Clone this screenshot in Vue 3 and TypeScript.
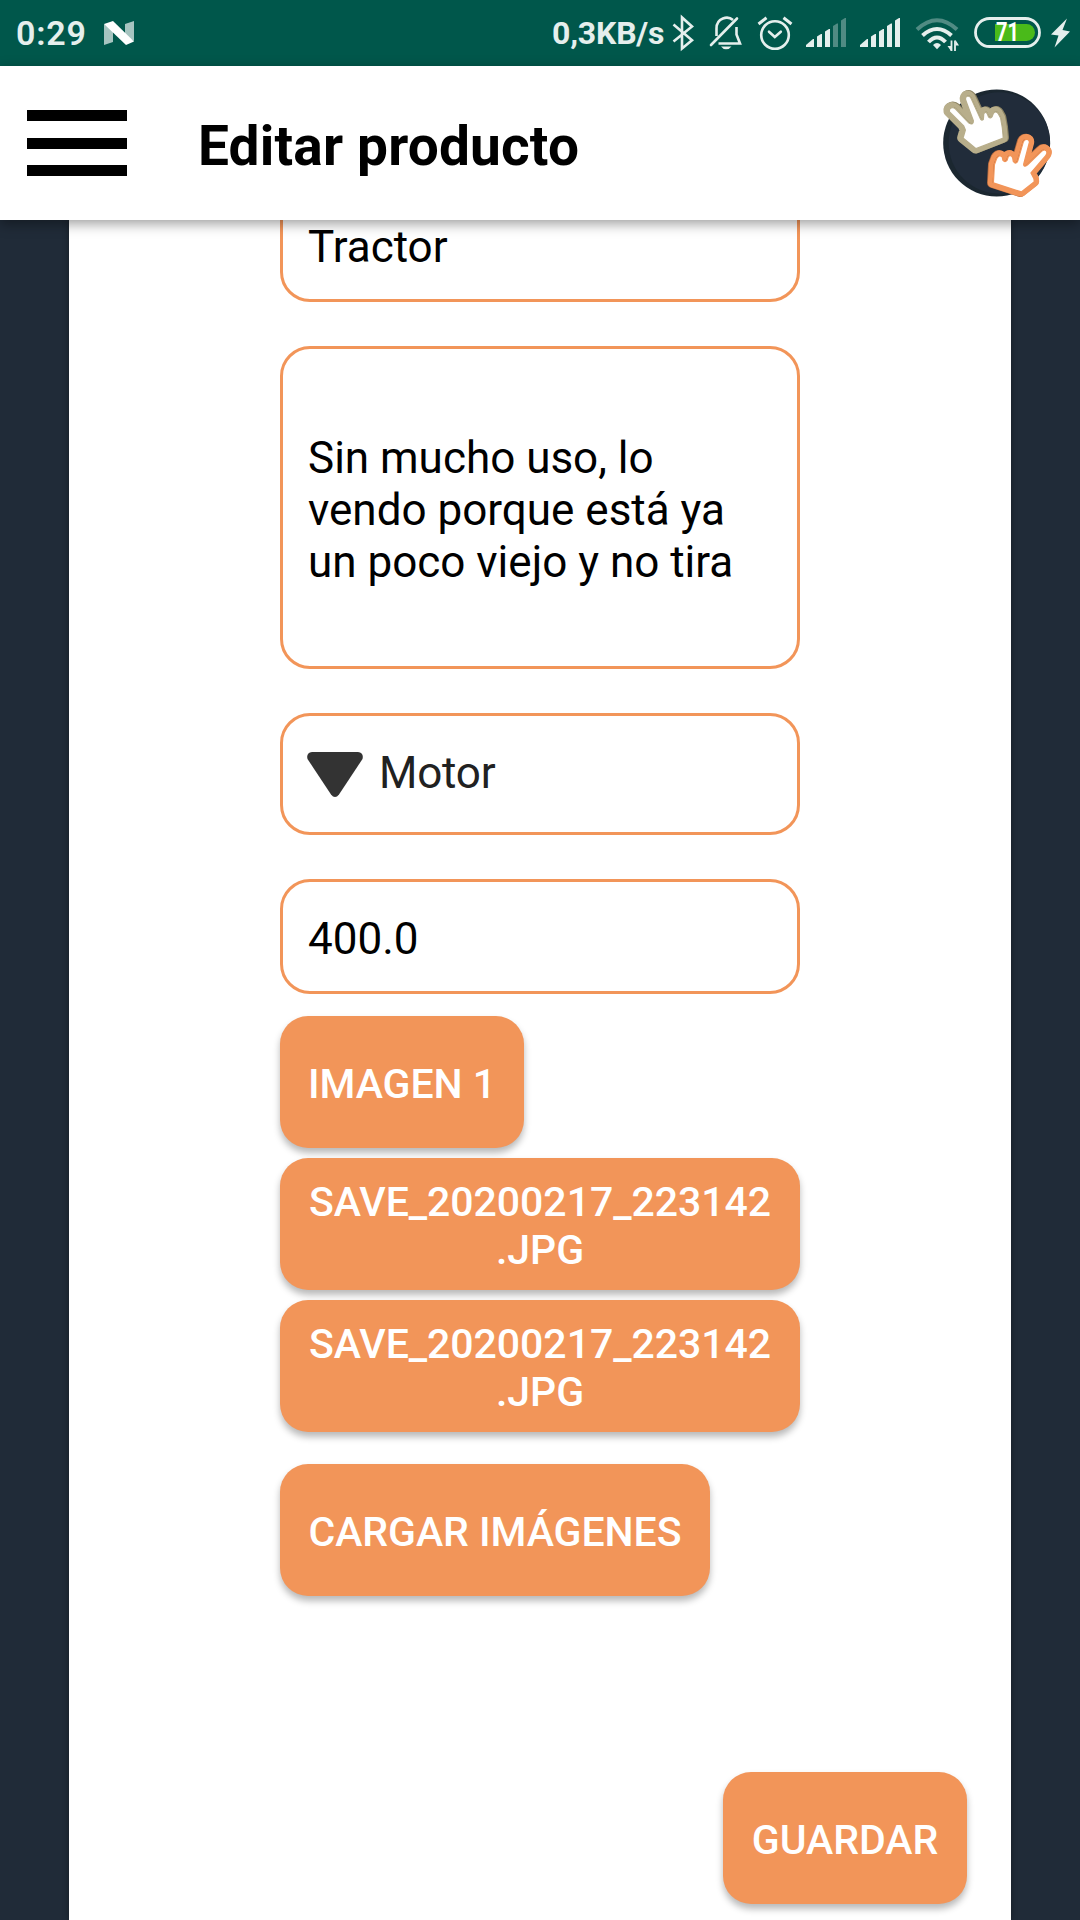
<script setup lang="ts">
interface Bar {
  x: number
  w: number
  top: number
}

const bars: Bar[] = [
  { x: 0, w: 8, top: 39 },
  { x: 11, w: 5, top: 34 },
  { x: 19, w: 5, top: 29 },
  { x: 27, w: 5, top: 23.5 },
  { x: 35, w: 5, top: 18 },
]

const barPath = (b: Bar, left: number): string => {
  const x = b.x + left
  const slope = b.w > 5 ? 6 : 2.5
  return `M${x} 47V${b.top + slope}L${x + b.w - 1} ${b.top}H${x + b.w}V47Z`
}

const files: string[] = ['SAVE_20200217_223142.JPG', 'SAVE_20200217_223142.JPG']

const khakiHand =
  'M88 123C86 111 98 107 107 115L147 157Q160 165 160 150L137 89C133 75 149 71 154 84L180 141Q184 152 190 146L191 130Q196 120 202 129L206 139Q212 144 216 138L220 128Q228 119 235 129L242 142Q248 168 250 202L168 234L129 202L136 178L131 166Z'
const orangeHand =
  'M374 240C383 247 374 257 369 262L330 308L339 325L340 334L301 365L217 338L220 283L227 264Q235 251 244 260L246 270Q252 277 258 270L262 258Q270 252 275 262L277 273Q285 284 290 272L307 214C311 204 327 205 325 217L308 282Q308 292 319 284L360 244Q368 236 374 240Z'
</script>

<template>
  <div class="screen">
    <div class="status">
      <span class="clock">0:29</span>
      <svg class="n-logo" width="32" height="66" viewBox="103 0 32 66">
        <path d="M104 24L113 30V42L104 45ZM125 24L134 21V41L125 37Z" fill="#fff" opacity=".65" />
        <path d="M104 24L113 21L134 41.500L126 45Z" fill="#fff" />
      </svg>
      <span class="rate">0,3KB/s</span>
      <svg width="140" height="66" viewBox="666 0 140 66" fill="none" stroke="#e5efed" stroke-width="2.600">
        <path d="M673.500 24.500L692 40.200L682 48.500V17.500L692 26.500L673.500 41.500" />
        <path d="M711 45L737 18.500" stroke-linecap="round" />
        <path d="M716.500 36V28.500C716.500 17.500 728 15.500 733 20M736.500 27V34.500L740 43.500H718.500" stroke-width="2.600" />
        <path d="M721 46.500H731.500Q729.500 49.300 726 49.300Q723 49.300 721 46.500Z" fill="#e5efed" stroke="none" />
        <circle cx="775" cy="35" r="13.800" />
        <path d="M758.500 24L766.500 17.800M783.500 17.800L791.500 24" stroke-width="3" />
        <path d="M769 31.700L774.800 37L780.800 31.700" stroke-linecap="round" />
      </svg>
      <svg width="104" height="66" viewBox="806 0 104 66" fill="#e5efed">
        <path v-for="(b, i) in bars" :key="'a' + i" :d="barPath(b, 806)" :opacity="i > 2 ? 0.35 : 1" />
        <path v-for="(b, i) in bars" :key="'b' + i" :d="barPath(b, 860)" />
      </svg>
      <svg width="60" height="66" viewBox="910 0 60 66" fill="none" stroke="#e5efed" stroke-width="4">
        <path d="M917 29.500Q937 11 957 29.500" opacity=".35" />
        <path d="M922.500 35.500Q937 22.500 951.500 35.500" />
        <path d="M928.500 42Q937 33 945.500 42" />
        <path d="M933 45Q937 41 941 45L937 49.300Z" fill="#e5efed" stroke="none" />
        <path d="M951.500 40.500V51M955 51V40.500" stroke-width="1.800" />
        <path d="M947.500 46H951V51ZM955.500 40V45.500H959Z" fill="#e5efed" stroke="none" />
      </svg>
      <svg width="110" height="66" viewBox="970 0 110 66">
        <rect x="975.500" y="18.500" width="64" height="28" rx="14" fill="none" stroke="#e5efed" stroke-width="2.800" />
        <path d="M995 24H1026.500A8.500 8.500 0 0 1 1026.500 41H995Z" fill="#4aba1a" />
        <text x="996" y="41" class="pct" textLength="23" lengthAdjust="spacingAndGlyphs">71</text>
        <path d="M1067 18.500L1051 34.500L1058.500 35.500L1054.500 47.500L1070 31.500L1062.500 30Z" fill="#e5efed" />
      </svg>
    </div>

    <header class="bar">
      <div class="menu"><i></i><i></i><i></i></div>
      <h1>Editar producto</h1>
      <svg class="logo" width="120" height="120" viewBox="50 45 360 360">
        <circle cx="229" cy="219" r="160.500" fill="#1b2730" />
        <circle cx="237" cy="219" r="152" fill="#212c3a" />
        <g stroke-linejoin="round">
          <path :d="khakiHand" fill="#8b8262" stroke="#8b8262" stroke-width="32" />
          <path :d="khakiHand" fill="none" stroke="#b8ae8b" stroke-width="31" transform="translate(-3 1)" />
          <path :d="khakiHand" fill="#8b8262" />
          <path :d="khakiHand" fill="#fff" stroke="#b8ae8b" stroke-width="4" transform="translate(-1 2)" />
          <path :d="orangeHand" fill="#a9623a" stroke="#b0683e" stroke-width="32" transform="translate(-1 0)" />
          <path :d="orangeHand" fill="none" stroke="#f29559" stroke-width="31" transform="translate(1 0)" />
          <path :d="orangeHand" fill="#a9623a" />
          <path :d="orangeHand" fill="#fff" stroke="#f29559" stroke-width="4" transform="translate(2 1)" />
        </g>
      </svg>
    </header>

    <main class="body">
      <section class="panel">
        <div class="field name">Tractor</div>
        <div class="field description">Sin mucho uso, lo<br />vendo porque está ya<br />un poco viejo y no tira</div>
        <div class="field category">
          <svg width="56" height="46" viewBox="0 0 56 46">
            <path d="M5 0H51Q57 1 55.500 7L32 42.500Q28 47.500 24 42.500L.5 7Q-1 1 5 0Z" fill="#333" />
          </svg>
          <span>Motor</span>
        </div>
        <div class="field price">400.0</div>
        <button class="btn image">IMAGEN 1</button>
        <button v-for="(f, i) in files" :key="i" class="btn file">{{ f.slice(0, -4) }}<br />{{ f.slice(-4) }}</button>
        <button class="btn load">CARGAR IMÁGENES</button>
        <button class="btn save">GUARDAR</button>
      </section>
    </main>
  </div>
</template>

<style>
body {
  margin: 0;
}
</style>

<style scoped>
.screen {
  width: 1080px;
  height: 1920px;
  overflow: hidden;
  display: flex;
  flex-direction: column;
  background: #202b38;
  font-family: Roboto, sans-serif;
}
.status {
  flex: none;
  height: 66px;
  display: flex;
  align-items: center;
  background: #00574b;
  color: #e5efed;
  font-weight: 500;
  font-size: 34px;
  line-height: 66px;
  white-space: nowrap;
}
.status svg {
  flex: none;
}
.clock {
  width: 87px;
  padding-left: 16px;
  font-weight: 600;
  letter-spacing: 0.8px;
}
.rate {
  margin-left: auto;
  width: 114px;
  font-weight: 700;
  font-size: 32px;
  letter-spacing: -0.2px;
}
.pct {
  font-family: Roboto, sans-serif;
  font-weight: 700;
  font-size: 25px;
  fill: #fff;
}
.bar {
  flex: none;
  position: relative;
  z-index: 1;
  height: 154px;
  display: flex;
  align-items: center;
  background: #fff;
  box-shadow: 0 4px 12px rgba(0, 0, 0, 0.38);
}
.menu {
  width: 100px;
  margin-left: 27px;
  display: flex;
  flex-direction: column;
  gap: 16.500px;
}
.menu i {
  height: 11px;
  background: #000;
}
h1 {
  margin: 5px 0 0 71px;
  font-size: 55px;
  line-height: 64px;
  font-weight: 700;
  letter-spacing: 0.18px;
  color: #000;
}
.logo {
  margin: 3.500px 23.500px 0 auto;
}
.body {
  flex: 1;
  padding: 0 69px;
}
.panel {
  width: 942px;
  height: 1700px;
  box-sizing: border-box;
  padding-left: 211px;
  display: flex;
  flex-direction: column;
  align-items: flex-start;
  background: #fff;
  box-shadow: 0 0 6px rgba(0, 0, 0, 0.35);
}
.field {
  flex: none;
  box-sizing: border-box;
  width: 520px;
  border: 3px solid #f29559;
  border-radius: 30px;
  padding: 5px 0 0 25px;
  margin-bottom: 44px;
  display: flex;
  align-items: center;
  font-size: 44px;
  line-height: 52px;
  color: #000;
}
.name {
  height: 115px;
  margin-top: -33px;
}
.description {
  height: 323px;
}
.category {
  height: 122px;
  padding: 0 0 0 24px;
  color: #212121;
}
.category svg {
  margin-top: 1px;
}
.category span {
  margin: -3px 0 0 16px;
  letter-spacing: -0.2px;
}
.price {
  height: 115px;
  margin-bottom: 22px;
}
.btn {
  flex: none;
  height: 132px;
  border: 0;
  border-radius: 28px;
  padding: 3px 0 0;
  background: #f29559;
  color: #fff;
  font: 500 41px/48px Roboto, sans-serif;
  letter-spacing: -0.05px;
  text-align: center;
  box-shadow: 0 5px 7px rgba(0, 0, 0, 0.28);
}
.image {
  width: 244px;
  margin-bottom: 10px;
}
.file {
  width: 520px;
  margin-bottom: 10px;
}
.load {
  width: 430px;
  margin-top: 22px;
}
.save {
  width: 244px;
  margin: 176px 0 0 443px;
}
</style>
